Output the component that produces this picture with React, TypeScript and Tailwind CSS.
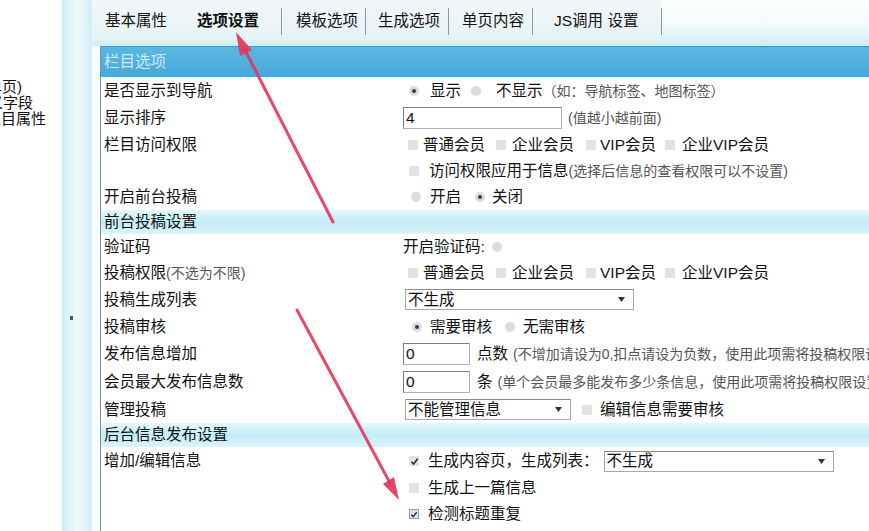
import React from 'react';

const FONT = '"Liberation Sans", "Noto Sans CJK SC", sans-serif';

const Radio = ({ on = false, cls = '' }: { on?: boolean; cls?: string }) => (
  <span className={`inline-flex shrink-0 w-[10px] h-[10px] rounded-full bg-[#dcdcdc] items-center justify-center ${cls}`}>
    {on && <span className="w-[4px] h-[4px] rounded-full bg-[#3a3a3a]" />}
  </span>
);

const Check = ({ on = false, blue = false, cls = '' }: { on?: boolean; blue?: boolean; cls?: string }) => (
  <span
    className={`inline-flex shrink-0 w-[10px] h-[10px] items-center justify-center ${
      blue ? 'bg-[#d6e4f0] border border-[#8fa8c0]' : 'bg-[#e2e2e2]'
    } ${cls}`}
  >
    {on && (
      <svg width="9" height="9" viewBox="0 0 9 9">
        <path d="M1.5 4.8 L3.6 7 L7.6 1.8" fill="none" stroke="#2a2a2a" strokeWidth="1.6" />
      </svg>
    )}
  </span>
);

const Select = ({ text, w }: { text: string; w: string }) => (
  <span className={`inline-flex shrink-0 items-center justify-between h-[21px] border border-[#a8a8a8] border-t-[#8a8a8a] bg-white pl-[2px] pr-[8px] ${w}`}>
    <span>{text}</span>
    <svg width="7" height="5" viewBox="0 0 7 5">
      <path d="M0 0 L7 0 L3.5 5 Z" fill="#333" />
    </svg>
  </span>
);

const Input = ({ value, w }: { value: string; w: string }) => (
  <span className={`inline-flex shrink-0 items-center h-[22px] border border-[#b0b0b0] border-t-[#7d7d7d] border-l-[#7d7d7d] bg-white pl-[2px] ${w}`}>
    {value}
  </span>
);

const Row = ({ label, h = 'h-[26px]', children }: { label: React.ReactNode; h?: string; children?: React.ReactNode }) => (
  <div className={`flex items-center ${h}`}>
    <div className="w-[302px] shrink-0 pl-[3px] whitespace-nowrap">{label}</div>
    <div className="flex-1 min-w-0 flex items-center whitespace-nowrap overflow-hidden">{children}</div>
  </div>
);

const Section = ({ title, h = 'h-[24px]' }: { title: string; h?: string }) => (
  <div className={`flex items-center pl-[3px] bg-gradient-to-b from-[#e4f7fc] via-[#c3ecf7] to-[#dcf3fa] ${h}`}>{title}</div>
);

const Note = ({ children, cls = '' }: { children: React.ReactNode; cls?: string }) => (
  <span className={`text-[14px] text-[#555] ${cls}`}>{children}</span>
);

const tabs = [
  { t: '基本属性', c: 'w-[90px] pl-[13px]' },
  { t: '选项设置', c: 'w-[100px] pl-[15px] font-bold border-r border-[#8c9aa2]' },
  { t: '模板选项', c: 'w-[84px] pl-[14px] border-r border-[#8c9aa2]' },
  { t: '生成选项', c: 'w-[83px] pl-[12px] border-r border-[#8c9aa2]' },
  { t: '单页内容', c: 'w-[84px] pl-[13px] border-r border-[#8c9aa2]' },
  { t: 'JS调用 设置', c: 'w-[129px] pl-[21px] border-r border-[#8c9aa2]' },
];

export default function App() {
  return (
    <div
      className="relative w-[869px] h-[531px] overflow-hidden flex bg-white text-[15.5px] leading-none text-[#111]"
      style={{ fontFamily: FONT }}
    >
      {/* left tree, cut off by the splitter as in the source page */}
      <div className="w-[62px] shrink-0 overflow-hidden pt-[79px] text-[15px] leading-[16px] whitespace-nowrap">
        <div className="-ml-[13px]">单页)</div>
        <div className="-ml-[12px]">义字段</div>
        <div className="-ml-[14px]">栏目属性</div>
      </div>

      {/* splitter */}
      <div className="w-[30px] shrink-0 flex flex-col bg-gradient-to-r from-[#cdeefa] via-[#eefafd] to-[#d2ecf6]">
        <div className="mt-[316px] ml-[8px] w-[3px] h-[4px] bg-[#555]" />
      </div>

      {/* main frame */}
      <div className="flex-1 min-w-0 flex flex-col bg-[#f6fbfd]">
        <div className="h-[46px] shrink-0 bg-gradient-to-b from-white via-[#f4fbfd] to-[#cdeef8]">
          <div className="h-[40px] flex items-center pt-[2px] w-[570px] bg-gradient-to-b from-[#f3f7f8] to-[#e6f2f6]">
            {tabs.map((tab) => (
              <div key={tab.t} className={`h-[27px] flex items-center whitespace-nowrap ${tab.c}`}>
                {tab.t}
              </div>
            ))}
          </div>
        </div>

        <div className="flex-1 flex min-h-0">
          <div className="w-[8px] shrink-0" />
          <div className="flex-1 min-w-0 flex flex-col bg-white border-l border-[#7f8f99]">
            <div className="h-[31px] shrink-0 flex items-center pl-[3px] border-t border-[#3d97c6] bg-gradient-to-b from-[#5bb7e2] to-[#46a9da] text-[#cfe9f6]">
              栏目选项
            </div>

            <Row label="是否显示到导航" h="h-[27px]">
              <Radio on cls="ml-[6px]" />
              <span className="ml-[11px]">显示</span>
              <Radio cls="ml-[10px]" />
              <span className="ml-[15px]">不显示</span>
              <Note>（如：导航标签、地图标签）</Note>
            </Row>
            <Row label="显示排序" h="h-[28px]">
              <Input value="4" w="w-[159px]" />
              <Note cls="ml-[6px]">(值越小越前面)</Note>
            </Row>
            <Row label="栏目访问权限">
              <Check cls="ml-[5px]" />
              <span className="ml-[5px]">普通会员</span>
              <Check cls="ml-[11px]" />
              <span className="ml-[6px]">企业会员</span>
              <Check cls="ml-[12px]" />
              <span className="ml-[4px]">VIP会员</span>
              <Check cls="ml-[9px]" />
              <span className="ml-[7px]">企业VIP会员</span>
            </Row>
            <Row label="">
              <Check cls="ml-[6px]" />
              <span className="ml-[10px]">访问权限应用于信息</span>
              <Note>(选择后信息的查看权限可以不设置)</Note>
            </Row>
            <Row label="开启前台投稿">
              <Radio cls="ml-[8px]" />
              <span className="ml-[9px]">开启</span>
              <Radio on cls="ml-[14px]" />
              <span className="ml-[7px]">关闭</span>
            </Row>

            <Section title="前台投稿设置" />

            <Row label="验证码">
              <span>开启验证码:</span>
              <Radio cls="ml-[7px]" />
            </Row>
            <Row label={<>投稿权限<Note>(不选为不限)</Note></>}>
              <Check cls="ml-[5px]" />
              <span className="ml-[5px]">普通会员</span>
              <Check cls="ml-[11px]" />
              <span className="ml-[6px]">企业会员</span>
              <Check cls="ml-[12px]" />
              <span className="ml-[4px]">VIP会员</span>
              <Check cls="ml-[9px]" />
              <span className="ml-[7px]">企业VIP会员</span>
            </Row>
            <Row label="投稿生成列表" h="h-[27px]">
              <Select text="不生成" w="w-[229px] ml-[2px]" />
            </Row>
            <Row label="投稿审核" h="h-[27px]">
              <Radio on cls="ml-[9px]" />
              <span className="ml-[8px]">需要审核</span>
              <Radio cls="ml-[13px]" />
              <span className="ml-[8px]">无需审核</span>
            </Row>
            <Row label="发布信息增加" h="h-[28px]">
              <Input value="0" w="w-[67px]" />
              <span className="ml-[7px]">点数</span>
              <Note cls="ml-[5px]">(不增加请设为0,扣点请设为负数，使用此项需将投稿权限设置为会员)</Note>
            </Row>
            <Row label="会员最大发布信息数" h="h-[28px]">
              <Input value="0" w="w-[67px]" />
              <span className="ml-[7px]">条</span>
              <Note cls="ml-[5px]">(单个会员最多能发布多少条信息，使用此项需将投稿权限设置为会员)</Note>
            </Row>
            <Row label="管理投稿" h="h-[27px]">
              <Select text="不能管理信息" w="w-[166px] ml-[2px]" />
              <Check cls="ml-[11px]" />
              <span className="ml-[8px]">编辑信息需要审核</span>
            </Row>

            <Section title="后台信息发布设置" />

            <Row label="增加/编辑信息" h="h-[28px]">
              <Check on cls="ml-[6px]" />
              <span className="ml-[9px]">生成内容页，生成列表：</span>
              <Select text="不生成" w="w-[230px] ml-[5px]" />
            </Row>
            <Row label="">
              <Check cls="ml-[6px]" />
              <span className="ml-[9px]">生成上一篇信息</span>
            </Row>
            <Row label="">
              <Check on blue cls="ml-[6px]" />
              <span className="ml-[9px]">检测标题重复</span>
            </Row>
            <div className="flex-1" />
          </div>
        </div>
      </div>

      {/* red annotation arrows */}
      <svg className="absolute inset-0 pointer-events-none" width="869" height="531" viewBox="0 0 869 531">
        <g stroke="#e4375a" strokeWidth="3" strokeLinecap="round" opacity="0.9">
          <line x1="333" y1="222" x2="245" y2="50" />
          <line x1="297" y1="310" x2="390" y2="483" />
        </g>
        <g fill="#e4375a" opacity="0.92">
          <path d="M236 32 L252 50 L240 56 Z" />
          <path d="M399 500 L383 484 L394 477 Z" />
        </g>
      </svg>
    </div>
  );
}
